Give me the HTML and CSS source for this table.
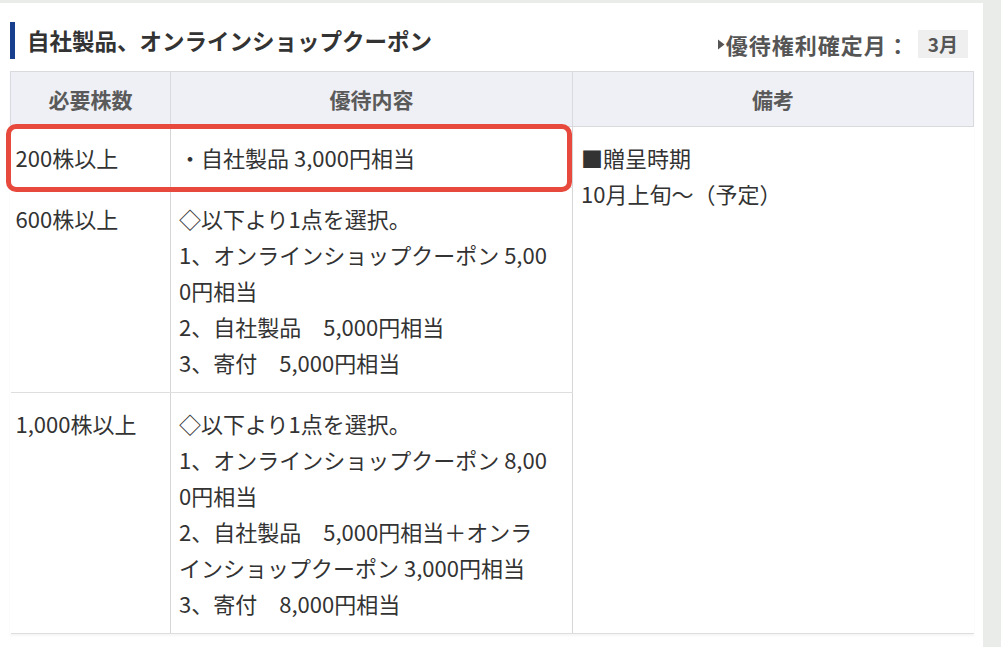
FILE: index.html
```html
<!DOCTYPE html>
<html lang="ja">
<head>
<meta charset="utf-8">
<link rel="stylesheet" href="styles.css">
</head>
<body>
<div class="card">
  <div class="title-row">
    <h2 class="title">自社製品、オンラインショップクーポン</h2>
    <div class="meta">
      <svg class="arrow" width="8" height="11" viewBox="0 0 8 11"><path d="M1 0.5 L7.5 5.5 L1 10.5 Z" fill="#555"/></svg>
      <span class="meta-label">優待権利確定月：</span>
      <span class="badge">3月</span>
    </div>
  </div>
  <div class="table-wrap">
    <table class="benefits">
      <colgroup>
        <col class="c1"><col class="c2"><col class="c3">
      </colgroup>
      <thead>
        <tr><th>必要株数</th><th>優待内容</th><th>備考</th></tr>
      </thead>
      <tbody>
        <tr>
          <td class="shares">200株以上</td>
          <td class="content">・自社製品 3,000円相当</td>
          <td class="note" rowspan="3">■贈呈時期<br>10月上旬〜（予定）</td>
        </tr>
        <tr>
          <td class="shares">600株以上</td>
          <td class="content">◇以下より1点を選択。<br>1、オンラインショップクーポン 5,000円相当<br>2、自社製品　5,000円相当<br>3、寄付　5,000円相当</td>
        </tr>
        <tr>
          <td class="shares">1,000株以上</td>
          <td class="content">◇以下より1点を選択。<br>1、オンラインショップクーポン 8,000円相当<br>2、自社製品　5,000円相当＋オンラインショップクーポン 3,000円相当<br>3、寄付　8,000円相当</td>
        </tr>
      </tbody>
    </table>
    <div class="highlight"></div>
  </div>
</div>
</body>
</html>
```
FILE: styles.css
```css
html, body {
  margin: 0;
  padding: 0;
}
body {
  background: #eaecea;
  font-family: "Noto Sans CJK JP", "Noto Sans", sans-serif;
  color: #333;
  overflow: hidden;
}
.card {
  width: 983px;
  height: 644px;
  margin-top: 3px;
  background: #fff;
  box-sizing: border-box;
  padding: 18px 10px 0 10px;
}
.title-row {
  display: flex;
  justify-content: space-between;
  align-items: center;
  margin-bottom: 11px;
  width: 963px;
}
.title {
  margin: 0;
  border-left: 5px solid #173f8d;
  padding-left: 12px;
  height: 37px;
  line-height: 37px;
  font-size: 22.5px;
  font-weight: 700;
  color: #333;
}
.meta {
  display: flex;
  align-items: center;
  margin-top: 7px;
  margin-right: 5px;
  color: #555;
  font-weight: 700;
}
.arrow {
  margin-right: 1px;
}
.meta-label {
  font-size: 22px;
  letter-spacing: 1px;
}
.badge {
  background: #efefef;
  font-size: 19px;
  line-height: 28px;
  padding: 0 10px;
  margin-left: 8px;
}
.table-wrap {
  position: relative;
  width: 963px;
}
.benefits {
  width: 963px;
  border-collapse: collapse;
  table-layout: fixed;
  font-size: 22px;
  line-height: 36px;
  box-shadow: 0 2px 2px rgba(0,0,0,0.04);
}
.c1 { width: 160px; }
.c2 { width: 402px; }
.c3 { width: 401px; }
.benefits th {
  background: #eef0f5;
  border: 1px solid #d9dadd;
  height: 54px;
  padding: 0;
  font-size: 21px;
  font-weight: 700;
  color: #5a5a5a;
  text-align: center;
}
.benefits td {
  vertical-align: top;
  padding: 12px 8px 12px 8px;
  border-bottom: 1px solid #dedede;
  text-align: left;
  color: #333;
}
.benefits td.shares {
  padding-left: 5px;
  border-right: 1px solid #d6d6d6;
}
.benefits td.content {
  border-right: 1px solid #d6d6d6;
  padding-right: 22px;
  word-break: break-all;
}
.benefits td.note {
  padding-left: 8px;
}
.highlight {
  position: absolute;
  left: -4px;
  top: 53px;
  width: 566px;
  height: 68px;
  box-sizing: border-box;
  border: 5px solid #e8493d;
  border-radius: 10px;
  pointer-events: none;
}
```
